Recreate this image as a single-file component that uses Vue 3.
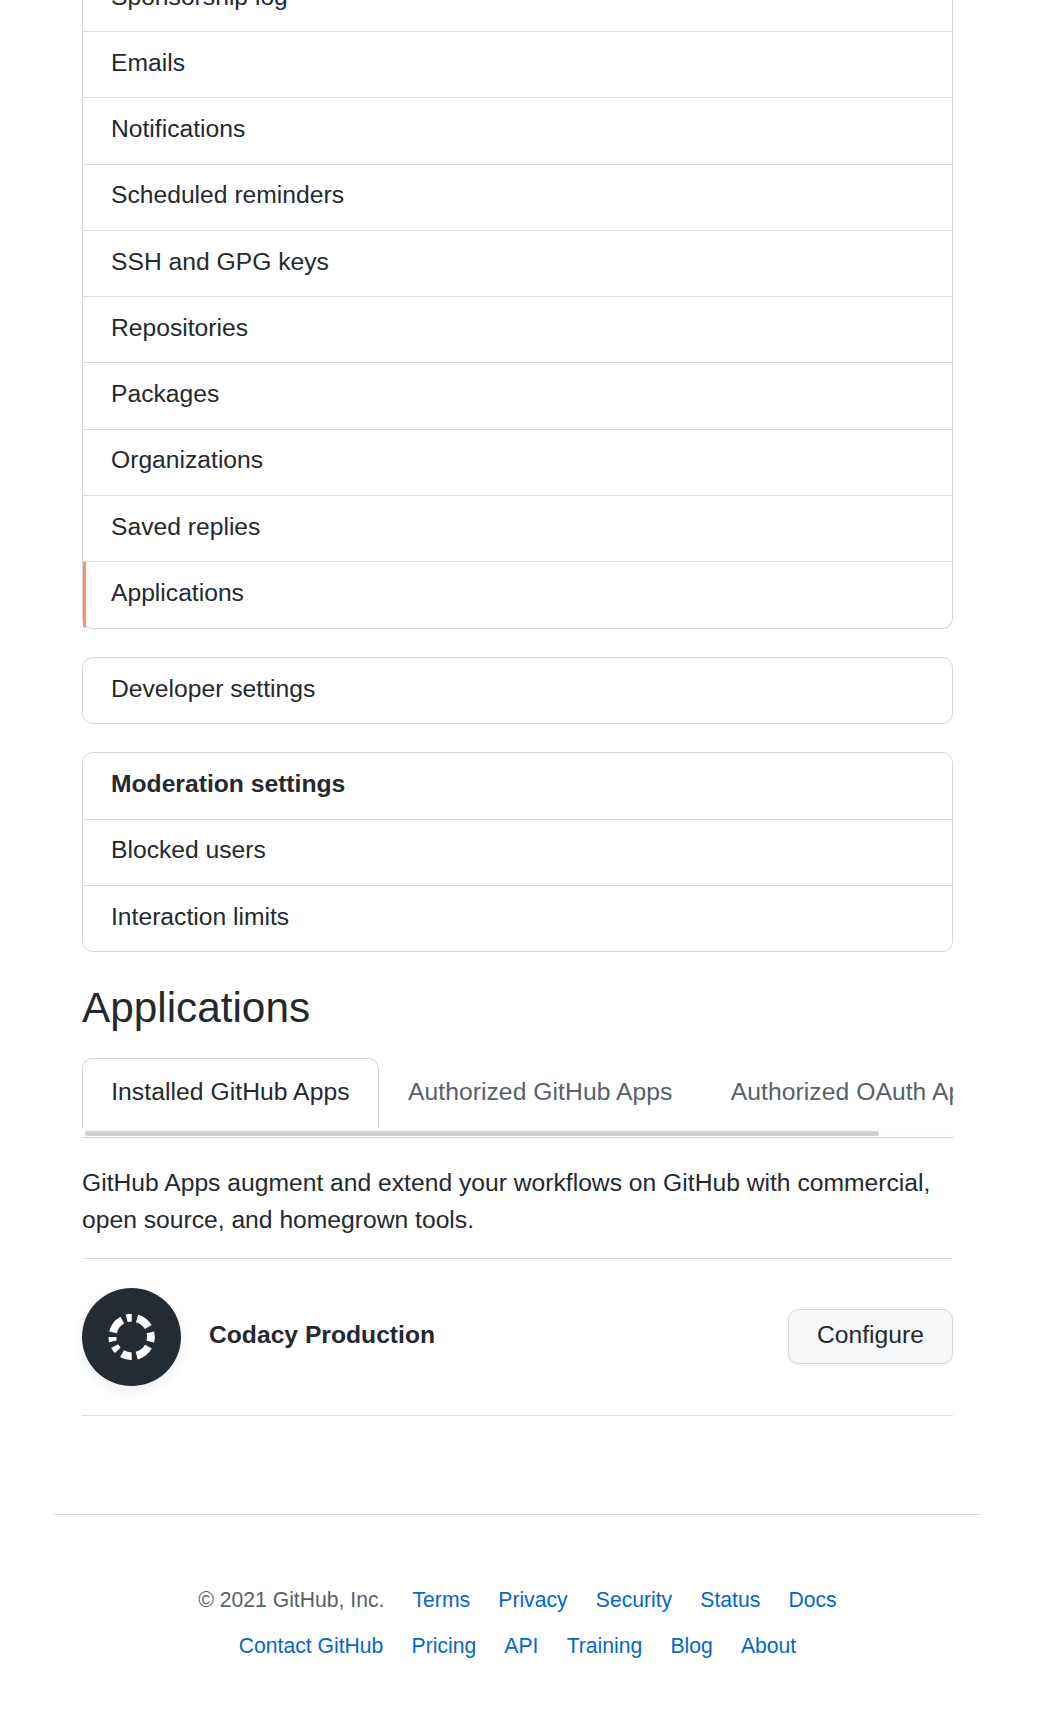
<script setup>
const accountLinks = [
  'Sponsorship log', 'Emails', 'Notifications', 'Scheduled reminders', 'SSH and GPG keys',
  'Repositories', 'Packages', 'Organizations', 'Saved replies', 'Applications'
]
const tabs = ['Installed GitHub Apps', 'Authorized GitHub Apps', 'Authorized OAuth Apps']
const footerRows = [
  ['Terms', 'Privacy', 'Security', 'Status', 'Docs'],
  ['Contact GitHub', 'Pricing', 'API', 'Training', 'Blog', 'About']
]

// Ring segments of the logo, as clockwise [start, end] angles from the top
const segments = [[-15, 0], [16, 59], [76, 104], [120, 165], [180, 210], [226, 242], [257, 270], [284, 331]]
const point = (deg) => {
  const a = (deg * Math.PI) / 180
  return `${(49.7 + 19.3 * Math.sin(a)).toFixed(2)} ${(49 - 19.3 * Math.cos(a)).toFixed(2)}`
}
const ring = segments.map(([a, b]) => `M${point(a)}A19.3 19.3 0 0 1 ${point(b)}`).join('')
</script>

<template>
  <div class="page">
    <main class="content">
      <nav class="menu menu-account">
        <a v-for="(item, i) in accountLinks" :key="item" class="item" :class="{ selected: i === accountLinks.length - 1 }">{{ item }}</a>
      </nav>
      <nav class="menu menu-developer"><a class="item">Developer settings</a></nav>
      <nav class="menu menu-moderation">
        <span class="item heading">Moderation settings</span>
        <a class="item">Blocked users</a>
        <a class="item">Interaction limits</a>
      </nav>

      <h2 class="title">Applications</h2>
      <div class="tabnav">
        <div class="tabs">
          <a v-for="(tab, i) in tabs" :key="tab" class="tab" :class="{ current: i === 0 }">{{ tab }}</a>
        </div>
        <div class="track"><div class="thumb"></div></div>
      </div>

      <p class="intro">GitHub Apps augment and extend your workflows on GitHub with commercial, open source, and homegrown tools.</p>

      <div class="app-row">
        <div class="avatar">
          <svg width="99" height="98" viewBox="0 0 99 98">
            <path :d="ring" fill="none" stroke="#fff" stroke-width="7.8" />
          </svg>
        </div>
        <strong class="name">Codacy Production</strong>
        <button class="btn">Configure</button>
      </div>
    </main>

    <footer class="footer">
      <ul v-for="(row, r) in footerRows" :key="r" class="links">
        <li v-if="r === 0">© 2021 GitHub, Inc.</li>
        <li v-for="link in row" :key="link"><a>{{ link }}</a></li>
      </ul>
    </footer>
  </div>
</template>

<style>
body { margin: 0; background: #fff; }
</style>

<style scoped>
* { box-sizing: border-box; }
.page {
  height: 1716px;
  overflow: hidden;
  font-family: "Liberation Sans", Arial, sans-serif;
  font-size: 24.67px;
  line-height: 37px;
  color: #24292e;
}
.content { width: 871px; margin-left: 82px; }
.menu {
  border: 1px solid #d1d5da;
  border-radius: 10.6px;
}
.menu-account {
  border-top: 0;
  border-radius: 0 0 10.6px 10.6px;
  margin-top: -34.25px;
  margin-bottom: 28.25px;
}
.menu-developer { margin-bottom: 28px; }
.menu-moderation { margin-bottom: 28px; }
.item {
  display: block;
  height: 66.25px;
  padding: 11.8px 28px 0;
  border-bottom: 1px solid #d9dde2;
  white-space: nowrap;
}
.item:last-child { border-bottom: 0; height: 65.25px; }
.menu-account .item:last-child { height: 65.75px; }
.item.selected { background: linear-gradient(#fd8c73, #fd8c73) left top / 3px 100% no-repeat; border-bottom-left-radius: 3px; }
.heading { font-weight: 700; }
.title {
  margin: 0;
  height: 78px;
  font-size: 42.3px;
  font-weight: 400;
  line-height: 56px;
}
.tabnav { border-bottom: 1px solid #d1d5da; height: 80px; overflow: hidden; }
.tabs { display: flex; height: 70px; overflow: hidden; }
.tab {
  flex: none;
  height: 71px;
  padding: 14px 28.2px 0;
  border: 1px solid transparent;
  border-bottom: 0;
  letter-spacing: .06px;
  color: #586069;
  white-space: nowrap;
}
.tab.current { border-color: #d1d5da; border-radius: 10.6px 10.6px 0 0; color: #24292e; }
.track { height: 9px; padding: 3px 3px 0; background: #fdfdfd; }
.thumb { width: 794px; height: 5px; border-radius: 2.5px; background: #d0d0d0; }
.intro { margin: 26px 0 0; height: 94px; }
.app-row {
  display: flex;
  align-items: center;
  height: 158px;
  border-top: 1px solid #d8dde2;
  border-bottom: 1px solid #d8dde2;
}
.avatar {
  width: 99px;
  height: 98px;
  margin-bottom: 1px;
  border-radius: 50%;
  background: #242c33;
  box-shadow: 0 5px 11px rgba(149, 157, 165, .17);
}
.avatar svg { display: block; }
.name { margin-left: 28px; padding-bottom: 5px; }
.btn {
  margin: 0 0 1px auto;
  width: 165px;
  height: 55px;
  padding: 0 0 4px;
  font: inherit;
  color: #24292e;
  background: #f6f8fa;
  border: 1px solid #d5d8da;
  border-radius: 10.6px;
  box-shadow: 0 2px 0 rgba(27, 31, 35, .04);
}
.footer {
  width: 927px;
  margin: 98px 0 0 54px;
  padding-top: 69px;
  border-top: 1px solid #d8dde6;
  font-size: 21.15px;
  line-height: 32px;
  color: #586069;
}
.links {
  display: flex;
  justify-content: center;
  gap: 28.2px;
  height: 46px;
  margin: 0;
  padding: 0;
  list-style: none;
  white-space: nowrap;
}
.links a { color: #0366d6; }
</style>
